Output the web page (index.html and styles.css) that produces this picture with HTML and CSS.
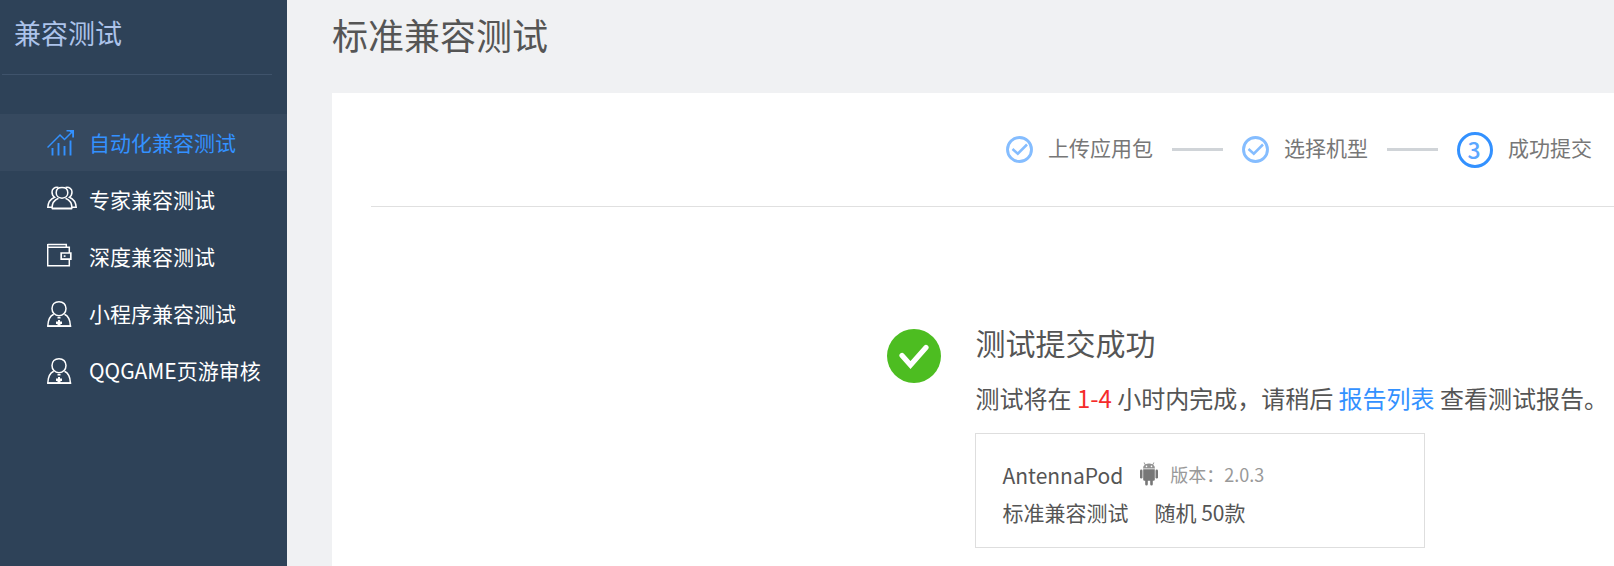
FILE: index.html
```
<!DOCTYPE html>
<html lang="zh-CN">
<head>
<meta charset="utf-8">
<meta name="viewport" content="width=device-width, initial-scale=1">
<title>标准兼容测试</title>
<link rel="stylesheet" href="styles.css">
</head>
<body>
<div class="app">
  <aside class="sidebar">
    <h2 class="sidebar-title">兼容测试</h2>
    <nav class="nav">
      <a class="nav-item active" href="#auto">
        <svg class="nav-icon" viewBox="0 0 30 28" fill="none" stroke="currentColor" aria-hidden="true">
          <path d="M.5 18.500 13 6l4.500 4.500L25 3" stroke-width="1.500"/>
          <path d="M19.500 1H27v7.500h-1.800V4.600L22.400 2.500h-2.900z" fill="currentColor" stroke="none"/>
          <path d="M5.500 19v7.500M11.500 14v12.500M17.500 17v9.500M23.500 11.500v15" stroke-width="1.900"/>
        </svg>
        <span class="nav-label">自动化兼容测试</span>
      </a>
      <a class="nav-item" href="#expert">
        <svg class="nav-icon" viewBox="0 0 30 28" fill="none" stroke="currentColor" stroke-width="1.500" aria-hidden="true">
          <path d="M15 1.600c-3.800 0-5.800 2.300-5.800 5.200s2.200 5.400 5.800 5.400 5.800-2.500 5.800-5.400-2-5.200-5.800-5.200z"/>
          <path d="M5 22.600c0-5.500 2.500-8.800 6.500-10.300M25 22.600c0-5.500-2.500-8.800-6.500-10.300"/>
          <path d="M4.800 22.500h20.400" stroke-width="2"/>
          <path d="M11.500 1.500C7.500.8 5 2.800 5 6c0 2.300.8 4 2.600 5.300C3.500 13 1.200 16 .8 21.300H5M18.500 1.500C22.500.8 25 2.800 25 6c0 2.300-.8 4-2.600 5.300 4.100 1.700 6.400 4.700 6.800 10H25"/>
        </svg>
        <span class="nav-label">专家兼容测试</span>
      </a>
      <a class="nav-item" href="#deep">
        <svg class="nav-icon" viewBox="0 0 30 28" fill="none" stroke="currentColor" stroke-width="1.500" aria-hidden="true">
          <path d="M.7 1.600h18.600v2.700M.7 1v21.700h21.600V16.200M22.300 10V4.300H1"/>
          <path d="M14.200 10h9.600v6.200h-9.600z" stroke-width="1.700"/>
          <path d="M16.700 12.300h1.800v1.600h-1.800z" fill="currentColor" stroke="none"/>
        </svg>
        <span class="nav-label">深度兼容测试</span>
      </a>
      <a class="nav-item" href="#mini">
        <svg class="nav-icon" viewBox="0 0 30 28" fill="none" stroke="currentColor" stroke-width="1.500" aria-hidden="true">
          <path d="M12 1.700c-4.300 0-7 2.900-7 6.800s2.800 7.300 7 7.300 7-3.400 7-7.300-2.700-6.800-7-6.800z"/>
          <path d="M6.700 14.300C3 16 1 19.500.8 26h22.600c-.2-6.500-2.200-10-5.900-11.700"/>
          <path d="M.3 26.200h23.900" stroke-width="1.600"/>
          <path d="M10.500 17h3v1.500h-3zM11 20h2v1.500h2v2.500h-1.500V26h-3v-2H9v-2.500h2z" fill="currentColor" stroke="none"/>
        </svg>
        <span class="nav-label">小程序兼容测试</span>
      </a>
      <a class="nav-item" href="#qqgame">
        <svg class="nav-icon" viewBox="0 0 30 28" fill="none" stroke="currentColor" stroke-width="1.500" aria-hidden="true">
          <path d="M12 1.700c-4.300 0-7 2.900-7 6.800s2.800 7.300 7 7.300 7-3.400 7-7.300-2.700-6.800-7-6.800z"/>
          <path d="M6.700 14.300C3 16 1 19.500.8 26h22.600c-.2-6.500-2.200-10-5.900-11.700"/>
          <path d="M.3 26.200h23.900" stroke-width="1.600"/>
          <path d="M10.500 17h3v1.500h-3zM11 20h2v1.500h2v2.500h-1.500V26h-3v-2H9v-2.500h2z" fill="currentColor" stroke="none"/>
        </svg>
        <span class="nav-label">QQGAME页游审核</span>
      </a>
    </nav>
  </aside>

  <main class="main">
    <h1 class="page-title">标准兼容测试</h1>
    <section class="panel">
      <ol class="steps">
        <li class="step">
          <svg class="step-done" viewBox="0 0 27 27" fill="none" stroke="currentColor" aria-hidden="true">
            <circle cx="13.500" cy="13.500" r="12" stroke-width="2.900"/>
            <path d="m6.500 13 5.300 4.700L21 8.500" stroke-width="2.500"/>
          </svg>
          <span class="step-label">上传应用包</span>
        </li>
        <li class="step-line" aria-hidden="true"></li>
        <li class="step">
          <svg class="step-done" viewBox="0 0 27 27" fill="none" stroke="currentColor" aria-hidden="true">
            <circle cx="13.500" cy="13.500" r="12" stroke-width="2.900"/>
            <path d="m6.500 13 5.300 4.700L21 8.500" stroke-width="2.500"/>
          </svg>
          <span class="step-label">选择机型</span>
        </li>
        <li class="step-line" aria-hidden="true"></li>
        <li class="step" aria-current="step">
          <span class="step-number">3</span>
          <span class="step-label">成功提交</span>
        </li>
      </ol>

      <div class="result">
        <svg class="result-icon" viewBox="0 0 54 54" aria-hidden="true">
          <circle cx="27" cy="27" r="27" fill="#4dbd21"/>
          <path d="m15 26.500 8.500 9.500L39 18.500" fill="none" stroke="#fff" stroke-width="5.200" stroke-linecap="round" stroke-linejoin="miter"/>
        </svg>
        <div class="result-body">
          <h2 class="result-title">测试提交成功</h2>
          <p class="result-text">测试将在 <span class="hours">1-4</span> 小时内完成，请稍后 <a class="link" href="#reports">报告列表</a> 查看测试报告。</p>
          <div class="card">
            <div class="card-row">
              <span class="app-name">AntennaPod</span>
              <svg class="android" viewBox="0 0 18 24" fill="currentColor" aria-hidden="true">
                <path d="M4.200.3 5.500 2.300Q9 .8 12.500 2.300L13.800.3l.6.400-1.200 2Q14.900 4 15 6.500H3Q3.100 4 4.800 2.700L3.600.7zM6.500 3.600a.8.800 0 1 0 0 1.600.8.800 0 0 0 0-1.600zm5 0a.8.800 0 1 0 0 1.600.8.800 0 0 0 0-1.600z" opacity=".8"/>
                <path d="M3.200 7.200h11.600v10.300q0 1.300-1.300 1.300h-.7v3.500q0 1.300-1.300 1.300t-1.300-1.300v-3.500H7.800v3.500q0 1.300-1.300 1.300t-1.300-1.300v-3.500h-.7q-1.300 0-1.300-1.300z"/>
                <rect x="0" y="7.500" width="2.500" height="9" rx="1.200"/>
                <rect x="15.500" y="7.500" width="2.500" height="9" rx="1.200"/>
              </svg>
              <span class="version">版本：2.0.3</span>
            </div>
            <div class="card-row card-row-spec">
              <span>标准兼容测试</span>
              <span>随机 50款</span>
            </div>
          </div>
        </div>
      </div>
    </section>
  </main>
</div>
</body>
</html>
```
FILE: styles.css
```
* {
  box-sizing: border-box;
}

body {
  margin: 0;
  background: #f0f1f3;
  color: #555;
  font-family: "Noto Sans CJK SC", sans-serif;
  font-size: 21px;
}

h1, h2, p, ol {
  margin: 0;
  padding: 0;
  font-weight: 400;
}

a {
  text-decoration: none;
}

.app {
  display: flex;
  min-height: 100vh;
}

/* Sidebar */
.sidebar {
  flex: 0 0 287px;
  background: #2e4258;
}

.sidebar-title {
  margin: 0 15px 39px 2px;
  padding: 13px 12px 21px;
  border-bottom: 1px solid #3f536b;
  color: #acc3ea;
  font-size: 27px;
  line-height: 40px;
}

.nav-item {
  display: flex;
  align-items: center;
  gap: 12px;
  height: 57px;
  padding-left: 47px;
  color: #fff;
  white-space: nowrap;
}

.nav-item.active {
  background: #36495f;
  color: #3391ff;
}

.nav-icon {
  flex: none;
  width: 30px;
  height: 28px;
}

.nav-label {
  padding-bottom: 2px;
}

/* Main column */
.main {
  display: flex;
  flex: 1;
  flex-direction: column;
  min-width: 0;
  padding-left: 45px;
}

.page-title {
  padding-bottom: 25px;
  font-size: 36px;
  line-height: 68px;
}

.panel {
  flex: 1;
  padding-left: 39px;
  background: #fff;
}

.steps {
  display: flex;
  align-items: center;
  justify-content: flex-end;
  gap: 19px;
  height: 114px;
  padding-right: 22px;
  border-bottom: 1px solid #e0e0e0;
  list-style: none;
  white-space: nowrap;
}

.step {
  display: flex;
  align-items: center;
  gap: 15px;
}

.step-done {
  width: 27px;
  height: 27px;
  color: #85bdff;
}

.step-label {
  padding-bottom: 6px;
  color: #777;
}

.step-line {
  width: 51px;
  height: 3px;
  background: #d0d4d8;
}

.step-number {
  display: flex;
  align-items: center;
  justify-content: center;
  width: 36px;
  height: 36px;
  padding: 0 2px 2px 0;
  border: 3px solid #3391ff;
  border-radius: 50%;
  color: #5ba7ff;
  font-size: 23px;
  font-weight: 500;
  line-height: 28px;
}

/* Submission result */
.result {
  display: flex;
  justify-content: flex-end;
  gap: 34px;
  padding: 115px 6px 18px 0;
}

.result-icon {
  flex: none;
  width: 54px;
  height: 54px;
  margin-top: 7px;
}

.result-title {
  font-size: 30px;
  line-height: 40px;
}

.result-text {
  margin: 18px 0 17px;
  font-size: 24px;
  line-height: 36px;
}

.hours {
  color: #f52b2b;
}

.link {
  color: #3391ff;
}

.card {
  max-width: 450px;
  padding: 23px 26px 16px;
  border: 1px solid #dedede;
  line-height: 37px;
}

.card-row {
  display: flex;
}

.card-row-spec {
  gap: 26px;
}

.android {
  width: 18px;
  height: 24px;
  margin: 5px 12px 0 17px;
  color: #777;
}

.version {
  color: #999;
  font-size: 18px;
  line-height: 35px;
}
```
